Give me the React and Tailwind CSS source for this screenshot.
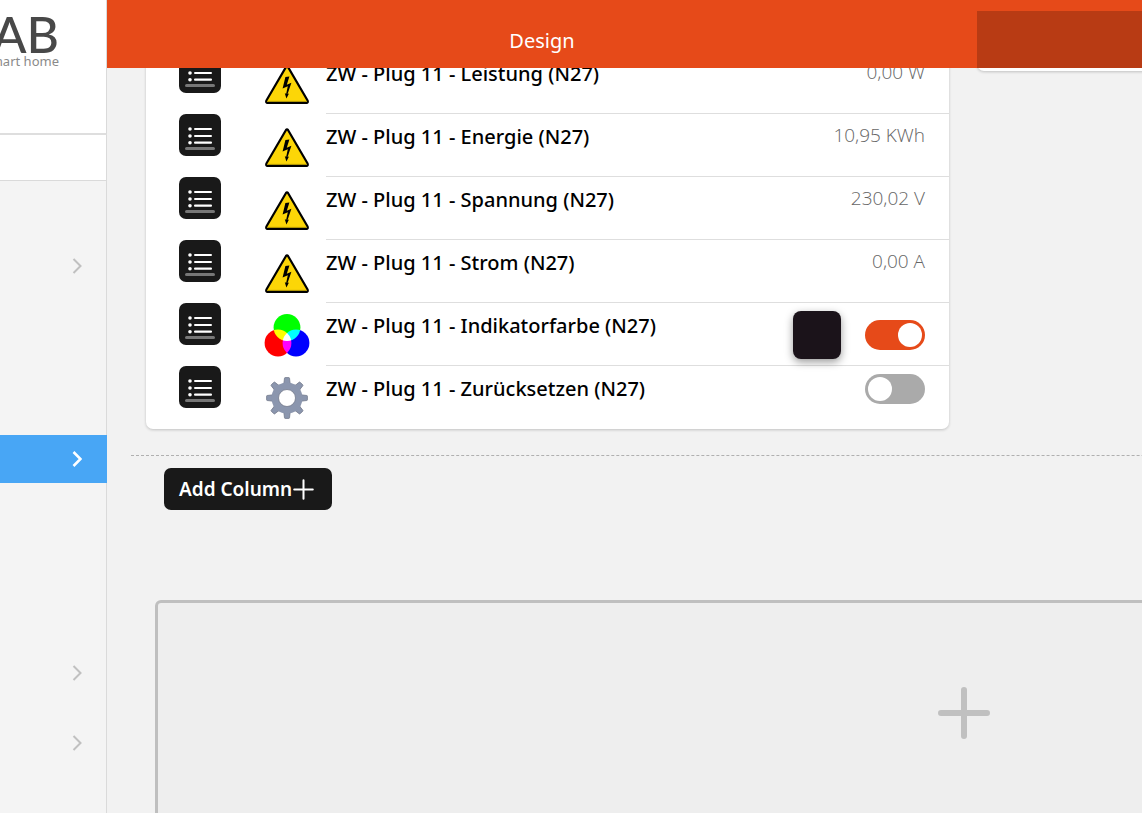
import clsx from "clsx";

const ROWS = [
  { id: "power", name: "ZW - Plug 11 - Leistung (N27)", icon: "voltage", value: "0,00 W" },
  { id: "energy", name: "ZW - Plug 11 - Energie (N27)", icon: "voltage", value: "10,95 KWh" },
  { id: "voltage", name: "ZW - Plug 11 - Spannung (N27)", icon: "voltage", value: "230,02 V" },
  { id: "current", name: "ZW - Plug 11 - Strom (N27)", icon: "voltage", value: "0,00 A" },
  { id: "color", name: "ZW - Plug 11 - Indikatorfarbe (N27)", icon: "rgb", color: true, on: true },
  { id: "reset", name: "ZW - Plug 11 - Zurücksetzen (N27)", icon: "gear", on: false },
];

const NAV = [
  { label: "Overview", className: "mt-[61px]" },
  { label: "Pages", className: "mt-[145px]", active: true },
  { label: "Settings", className: "mt-[166px]" },
  { label: "Help", className: "mt-[22px]" },
];

function VoltageIcon() {
  return (
    <svg viewBox="0 0 46 46" className="size-[46px]" aria-hidden="true">
      <path
        d="M22 5 Q23 3.600 24 5 L43.600 38.500 Q44.400 41 42.400 41 H3.600 Q1.600 41 2.400 38.500 Z"
        fill="#fcd607"
        stroke="#000"
        strokeWidth="2.200"
        strokeLinejoin="round"
      />
      <path d="M4 39.400 H42" stroke="#a88f05" strokeWidth="1" />
      <path
        d="M21.400 15 L25.400 14.600 L22.800 22.800 L27.400 20.800 L23.600 32 L25 31.600 L22.400 36.500 L20.800 31.200 L22.200 31.800 L23.800 24.300 L18.600 26.600 Z"
        fill="#000"
      />
    </svg>
  );
}

function RgbIcon() {
  return (
    <svg viewBox="0 0 46 46" className="size-[46px] isolate" aria-hidden="true">
      <circle cx="23" cy="13.500" r="13.400" fill="#0f0" className="mix-blend-screen" />
      <circle cx="14" cy="29" r="13.400" fill="#f00" className="mix-blend-screen" />
      <circle cx="32" cy="29" r="13.400" fill="#00f" className="mix-blend-screen" />
    </svg>
  );
}

function GearIcon() {
  return (
    <svg viewBox="0 0 46 46" className="size-[46px]" aria-hidden="true">
      <g fill="#8b96ae" stroke="#72798a" strokeWidth="0.8">
        {[0, 45, 90, 135, 180, 225, 270, 315].map((angle) => (
          <path
            key={angle}
            d="M17.500 9 L20 5.500 L20.500 1.200 Q20.600 0.600 21.200 0.600 H24.800 Q25.400 0.600 25.500 1.200 L26 5.500 L28.500 9 Z"
            transform={`rotate(${angle} 23 21)`}
          />
        ))}
      </g>
      <circle cx="23" cy="21" r="15.500" fill="#8b96ae" />
      <circle cx="23" cy="21" r="8.500" fill="#fff" stroke="#72798a" strokeWidth="0.8" />
    </svg>
  );
}

const ICONS = { voltage: VoltageIcon, rgb: RgbIcon, gear: GearIcon };

function ListIcon() {
  return (
    <svg viewBox="0 0 42 42" className="size-full" aria-hidden="true">
      <g fill="#fff">
        <circle cx="11" cy="15" r="1.800" />
        <circle cx="11" cy="22" r="1.800" />
        <circle cx="11" cy="28.700" r="1.800" />
        <rect x="15" y="14" width="18" height="2" rx="1" />
        <rect x="15" y="21" width="18" height="2" rx="1" />
        <rect x="15" y="27.500" width="18" height="2.300" rx="1" />
      </g>
      <rect x="6" y="33" width="30" height="3" rx="1.500" fill="#777" />
    </svg>
  );
}

function Plus({ className, strokeWidth }) {
  return (
    <svg viewBox="0 0 52 52" className={className} aria-hidden="true">
      <path
        d="M26 3 V49 M3 26 H49"
        stroke="currentColor"
        strokeWidth={strokeWidth}
        strokeLinecap="round"
      />
    </svg>
  );
}

function Row({ row, last }) {
  const Icon = ICONS[row.icon];

  return (
    <li className="flex h-[63px] pl-[33px]">
      <button
        type="button"
        aria-label={`Options ${row.name}`}
        className="size-[42px] shrink-0 rounded-[7px] bg-[#191919]"
      >
        <ListIcon />
      </button>
      <div className="ml-[43px] w-[62px] shrink-0 pt-[11px]">
        <Icon />
      </div>
      <div
        className={clsx(
          "flex flex-1 justify-between pr-6",
          !last && "border-b border-[#dedede]"
        )}
      >
        <span className="pt-2 text-[20px] leading-[30px] font-medium text-black">
          {row.name}
        </span>
        {row.value ? (
          <span className="pt-[7px] font-['Open_Sans'] text-[19px] leading-[28px] font-light text-[#666]">
            {row.value}
          </span>
        ) : (
          <div className={clsx("flex gap-6", row.color ? "items-center pt-0.5" : "items-start pt-2")}>
            {row.color ? (
              <button
                type="button"
                aria-label="Farbe"
                className="size-12 rounded-lg bg-[#1b131a] shadow-[0_3px_8px_rgba(0,0,0,0.4)]"
              />
            ) : null}
            <input
              type="checkbox"
              role="switch"
              aria-label={row.name}
              defaultChecked={row.on}
              className="h-[30px] w-[60px] appearance-none rounded-full bg-[#aaa] p-[3px] before:block before:size-6 before:rounded-full before:bg-white checked:bg-[#e64a19] checked:before:ml-[30px]"
            />
          </div>
        )}
      </div>
    </li>
  );
}

function Sidebar() {
  return (
    <aside className="w-[107px] shrink-0 bg-[#f4f4f4]">
      <div className="flex h-[135px] flex-col items-end overflow-hidden border-r border-b-2 border-r-[#dadada] border-b-[#dedede] bg-white pt-[14px] pr-[47px] whitespace-nowrap">
        <span className="font-['Lato'] text-[50px] leading-[40px] font-medium text-[#484848]">
          AB
        </span>
        <span className="text-[13px] leading-[14px] text-[#8a8a8a]">smart home</span>
      </div>
      <div className="h-[46px] border-r border-b border-[#dadada] bg-white" />
      <nav className="h-full border-r border-[#dadada]">
        <div className="flex flex-col">
          {NAV.map((item) => (
            <a
              key={item.label}
              href="#"
              aria-label={item.label}
              className={clsx(
                "-mr-px flex h-12 items-center justify-end pr-[25px]",
                item.className,
                item.active ? "bg-[#48a6f5] text-white" : "text-[#c0c0c0]"
              )}
            >
              <svg viewBox="0 0 10 18" className="h-[18px] w-[10px]" fill="none" aria-hidden="true">
                <path
                  d="M1.500 2 L8.500 9 L1.500 16"
                  stroke="currentColor"
                  strokeWidth={item.active ? 2.6 : 2}
                />
              </svg>
            </a>
          ))}
        </div>
      </nav>
    </aside>
  );
}

export default function App() {
  return (
    <div className="flex h-screen overflow-hidden bg-[#f2f2f2] font-['Noto_Sans',sans-serif]">
      <Sidebar />
      <div className="flex min-w-0 flex-1 flex-col">
        <header className="flex h-[68px] shrink-0 bg-[#e64a19] pt-[11px]">
          <h1 className="flex-1 pt-[15px] text-center text-[20px] leading-[30px] text-white">
            Design
          </h1>
          <div className="w-[165px] bg-[#b83b14]" />
        </header>

        <main className="flex-1 overflow-hidden">
          {/* the two columns are wider than the window, scrolled a little down */}
          <div className="-mt-[17px] min-w-[1712px] px-6">
            <section className="grid grid-cols-2 items-start gap-7 px-[15px] pb-[26px]">
              <ul className="rounded-[7px] bg-white shadow-[0_1px_3px_rgba(0,0,0,0.2)]">
                {ROWS.map((row, i) => (
                  <Row key={row.id} row={row} last={i === ROWS.length - 1} />
                ))}
              </ul>
              <div className="h-5 rounded-[7px] bg-white shadow-[0_1px_3px_rgba(0,0,0,0.2)]" />
            </section>

            <section className="border-t border-dashed border-[#b0b0b0] px-[33px] pt-3">
              <button
                type="button"
                className="flex h-[42px] w-[168px] items-center gap-px rounded-[7px] bg-[#191919] pl-[15px] text-[19px] font-semibold text-white"
              >
                Add Column
                <Plus className="size-[21px]" strokeWidth={5} />
              </button>
            </section>

            <button
              type="button"
              aria-label="Add section"
              className="mx-6 mt-[90px] flex h-[226px] w-[1618px] items-center justify-center rounded-md border-3 border-[#bfbfbf] bg-[#eee] text-[#c0c0c0]"
            >
              <Plus className="size-[52px]" strokeWidth={6} />
            </button>
          </div>
        </main>
      </div>
    </div>
  );
}
